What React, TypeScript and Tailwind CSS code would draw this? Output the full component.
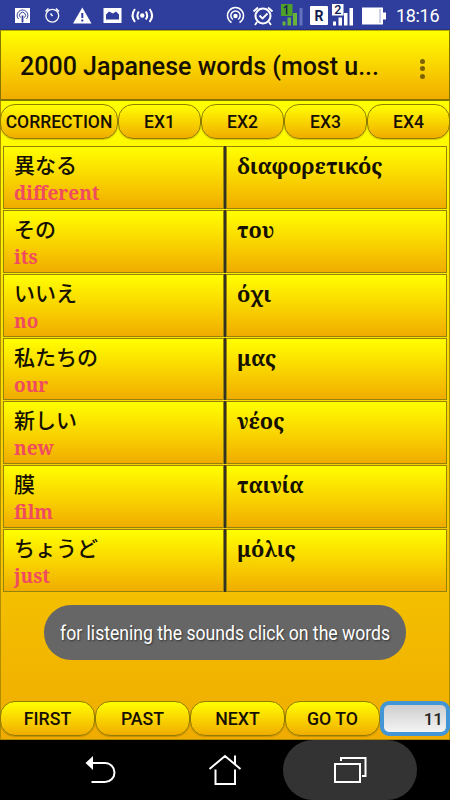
import React from 'react';

interface Word {
  japanese: string;
  english: string;
  greek: string;
}

const words: Word[] = [
  { japanese: '異なる', english: 'different', greek: 'διαφορετικός' },
  { japanese: 'その', english: 'its', greek: 'του' },
  { japanese: 'いいえ', english: 'no', greek: 'όχι' },
  { japanese: '私たちの', english: 'our', greek: 'μας' },
  { japanese: '新しい', english: 'new', greek: 'νέος' },
  { japanese: '膜', english: 'film', greek: 'ταινία' },
  { japanese: 'ちょうど', english: 'just', greek: 'μόλις' },
];

const exercises = ['EX1', 'EX2', 'EX3', 'EX4'];
const pageButtons = ['FIRST', 'PAST', 'NEXT', 'GO TO'];

function StatusBar() {
  return (
    <div className="h-[30px] bg-[#2f3e9c] border-b border-[#26337c] flex items-center justify-between text-white">
      <svg width="160" height="30" viewBox="0 0 160 30" fill="none" stroke="currentColor">
        <rect x="15" y="8" width="15" height="15" fill="white" stroke="none" />
        <g stroke="#2f3e9c" strokeWidth="1">
          <path d="M18.5 19a5.4 5.4 0 1 1 8 0M20.5 17.5a3 3 0 1 1 4 0" />
          <path d="M22.5 15.5v7" strokeWidth="1.8" />
        </g>
        <circle cx="52.3" cy="15.8" r="6.4" strokeWidth="1.3" />
        <path d="M45.5 11.500l3-3M59 11.500l-3-3M50.500 13.500l2 2.500" strokeWidth="1.5" />
        <path d="M82.3 7.5L91.5 23.5H73z" fill="white" stroke="none" />
        <path d="M82.3 13v5M82.3 19.5v2" stroke="#2f3e9c" strokeWidth="2" />
        <path fillRule="evenodd" d="M103.5 8h18v15h-18zM106 19.5h13v-5l-3-3-3 2-4-2-3 3z" fill="white" stroke="none" />
        <circle cx="142.3" cy="15.5" r="2.2" fill="white" stroke="none" />
        <path d="M138.8 11.5q-2.8 4 0 8M145.8 11.5q2.8 4 0 8M135 9q-5 6.5 0 13M149.6 9q5 6.5 0 13" strokeWidth="2" />
      </svg>
      <svg width="225" height="30" viewBox="0 0 225 30" fill="none" stroke="currentColor">
        <circle cx="10.5" cy="16" r="2.2" fill="white" stroke="none" />
        <path d="M6.5 22.5a8 8 0 1 1 8 0M7.8 19.5a4.7 4.7 0 1 1 5.4 0" strokeWidth="1.5" />
        <circle cx="38" cy="16" r="7.5" strokeWidth="2" />
        <path d="M28.5 11.5l4.5-4M47.5 11.5l-4.5-4M34.5 15.5l3 3 5-5M32 22l-2 3M44 22l2 3" strokeWidth="1.8" />
        <rect x="56" y="4" width="11.5" height="12" fill="#4f9f2b" stroke="none" />
        <path d="M58.8 8l2.8-2v8.5" stroke="#17234f" strokeWidth="1.5" />
        <g fill="#69b33a" stroke="none">
          <rect x="57.5" y="21.5" width="3" height="4" />
          <rect x="62.5" y="17.5" width="3.5" height="8" />
          <rect x="68" y="13" width="4" height="12.5" />
          <rect x="74.5" y="8" width="3" height="17.5" fill="#6572bd" />
        </g>
        <rect x="85" y="6" width="18" height="19" rx="1" fill="white" stroke="none" />
        <text x="94" y="20.5" textAnchor="middle" fontSize="14" fontWeight="700" fontFamily="Roboto" fill="#111b4d" stroke="none">R</text>
        <rect x="107" y="4" width="11.5" height="11.5" fill="white" stroke="none" />
        <text x="112.7" y="14.3" textAnchor="middle" fontSize="12.5" fontWeight="500" fontFamily="Roboto" fill="#111b4d" stroke="none">2</text>
        <g fill="white" stroke="none">
          <rect x="108" y="21.5" width="3" height="4" />
          <rect x="113.5" y="17.5" width="3.5" height="8" />
          <rect x="119" y="13" width="3.5" height="12.5" />
          <rect x="124.5" y="8" width="3.5" height="17.5" />
          <rect x="137" y="7.5" width="21" height="17" />
          <rect x="157" y="12.5" width="4" height="7" />
        </g>
        <path d="M155 9v14" stroke="#9aa3d0" />
        <text x="171" y="22.3" fontSize="18" fontWeight="400" fontFamily="Roboto" fill="white" stroke="none" textLength="43.5">18:16</text>
      </svg>
    </div>
  );
}

function Header() {
  return (
    <header className="h-[71px] border-b-2 border-x border-[#857600] border-t border-t-[#b8ad00] bg-linear-to-b from-[#ffff00] to-[#f0ac00] flex items-center justify-between pl-[19px] pr-6">
      <h1 className="pt-1 text-[25px] font-medium text-[#171000] whitespace-nowrap">
        2000 Japanese words (most u...
      </h1>
      <div className="flex flex-col gap-[2.5px] pt-[7px]">
        <span className="size-[5px] rounded-full bg-[#7d6200]" />
        <span className="size-[5px] rounded-full bg-[#7d6200]" />
        <span className="size-[5px] rounded-full bg-[#7d6200]" />
      </div>
    </header>
  );
}

interface PillButtonProps {
  label: string;
  className: string;
}

function PillButton({ label, className }: PillButtonProps) {
  return (
    <button
      className={`h-[35px] pt-0.5 rounded-[15px] border border-[#8f7c00] bg-linear-to-b from-[#ffff00] to-[#f0ac00] font-medium text-[#171000] whitespace-nowrap flex items-center justify-center shadow-[0_1px_1px_rgba(110,80,0,0.3)] ${className}`}
    >
      {label}
    </button>
  );
}

function WordRow({ word }: { word: Word }) {
  return (
    <div className="h-[62.8px] flex">
      <div className="w-[221px] border border-[#94820c] bg-linear-to-b from-[#ffff00] to-[#f0ac00] pl-2.5">
        <p lang="ja" className="h-[33px] leading-[34px] text-[21px] font-medium font-['Noto_Sans_CJK_JP',sans-serif] text-[#151000]">
          {word.japanese}
        </p>
        <p className="leading-[26px] text-[19px] font-bold font-['Noto_Serif',serif] text-[#f04c60]">
          {word.english}
        </p>
      </div>
      <div className="w-[2px] bg-[#343323]" />
      <div className="flex-1 border border-[#94820c] bg-linear-to-b from-[#ffff00] to-[#f0ac00] pl-2.5">
        <p lang="el" className="leading-[37px] text-[21.7px] font-bold font-['Noto_Serif',serif] text-[#151000]">
          {word.greek}
        </p>
      </div>
    </div>
  );
}

function NavigationBar() {
  return (
    <nav className="h-[60px] bg-black text-white flex items-center pl-[33px]">
      <button className="w-[134px] flex justify-center">
        <svg width="32" height="32" viewBox="0 0 32 32" fill="none" stroke="currentColor" strokeWidth="2">
          <path d="M8 9h13a9.500 9.500 0 0 1 0 19H7.500" />
          <path d="M1.500 9l7.500-7v14z" fill="currentColor" stroke="none" />
        </svg>
      </button>
      <button className="w-[116px] flex justify-center">
        <svg width="36" height="34" viewBox="0 0 36 34" fill="none" stroke="currentColor" strokeWidth="2">
          <path d="M2.500 16L18 3 33.500 16M28 11V2.500M8.500 16.500v14.500H28V16.500" />
        </svg>
      </button>
      <button className="w-[134px] h-[60px] rounded-[30px] bg-[#333333] flex items-center justify-center">
        <svg width="34" height="28" viewBox="0 0 34 28" fill="none" stroke="currentColor" strokeWidth="2">
          <rect x="2" y="8" width="25" height="18" />
          <path d="M8 5V2h24.5v18H29" />
        </svg>
      </button>
    </nav>
  );
}

export default function App() {
  return (
    <div className="w-[450px] h-[800px] overflow-hidden flex flex-col font-['Roboto',sans-serif]">
      <StatusBar />
      <Header />
      <main className="relative h-[639px] border-x border-b border-[#b08d00] bg-[linear-gradient(to_bottom,#ffff00,#f0ac00)] flex flex-col">
        <div className="-mx-px pt-[3px] flex">
          <PillButton label="CORRECTION" className="w-[118px] text-[17.5px]" />
          {exercises.map((label) => (
            <PillButton key={label} label={label} className="flex-1 text-[17.5px]" />
          ))}
        </div>
        <div className="mt-[7.3px] mx-0.5 flex flex-col gap-px">
          {words.map((word) => (
            <WordRow key={word.english} word={word} />
          ))}
        </div>
        <div className="absolute left-[43px] top-[504px] w-[362px] h-[55px] rounded-[27px] bg-[#666666] flex items-center justify-center">
          <span className="pt-0.5 text-[20.5px] text-white whitespace-nowrap scale-x-[0.859] [text-shadow:1px_1px_2px_#333]">
            for listening the sounds click on the words
          </span>
        </div>
        <div className="-mx-px mt-auto mb-[3px] flex">
          {pageButtons.map((label) => (
            <PillButton key={label} label={label} className="w-[95px] text-[17.7px]" />
          ))}
          <input
            readOnly
            value="11"
            className="w-[70px] h-[35px] rounded-[9px] border-4 border-[#4296d5] bg-linear-to-b from-[#cecece] to-[#f4f4f4] pr-[3px] text-right text-[17px] font-medium text-[#222] outline-none"
          />
        </div>
      </main>
      <NavigationBar />
    </div>
  );
}
